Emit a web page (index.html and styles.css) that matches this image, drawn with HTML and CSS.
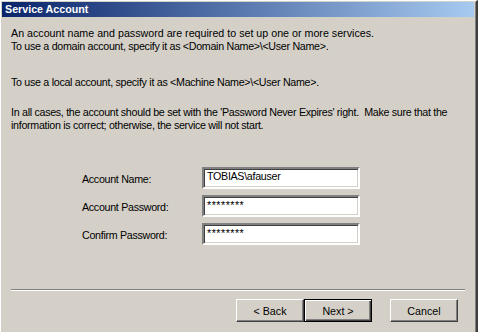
FILE: index.html
```html
<!DOCTYPE html>
<html lang="en">
<head>
    <meta charset="UTF-8">
    <title>Service Account</title>
    <link rel="stylesheet" href="styles.css">
</head>
<body>
    <div class="window">
        <div class="titlebar">Service Account</div>

        <div class="content">
            <p class="para first"><span class="wide">An account name and password are required to set up one or more services.</span><br>
            To use a domain account, specify it as &lt;Domain Name&gt;\&lt;User Name&gt;.</p>

            <p class="para second">To use a local account, specify it as &lt;Machine Name&gt;\&lt;User Name&gt;.</p>

            <p class="para third">In all cases, the account should be set with the 'Password Never Expires' right.&nbsp; Make sure that the<br>
            information is correct; otherwise, the service will not start.</p>

            <!-- Account fields -->
            <div class="fields">
                <label class="field-label">Account Name:</label>
                <div class="field-box">TOBIAS\afauser</div>
                <label class="field-label">Account Password:</label>
                <div class="field-box masked">********</div>
                <label class="field-label">Confirm Password:</label>
                <div class="field-box masked">********</div>
            </div>
        </div>

        <div class="separator"></div>

        <div class="buttons">
            <button class="btn">&lt; Back</button>
            <button class="btn btn-default">Next &gt;</button>
            <button class="btn btn-cancel">Cancel</button>
        </div>
    </div>
</body>
</html>
```

FILE: styles.css
```css
html, body {
    margin: 0;
    padding: 0;
    background-color: #d4d0c8;
}
body {
    width: 478px;
    height: 332px;
    overflow: hidden;
    font-family: "Liberation Sans", Arial, sans-serif;
    font-size: 10.7px;
    letter-spacing: -0.3px; /* tighter, closer to Tahoma */
    color: #000;
}
.window {
    height: 332px;
    box-sizing: border-box;
    border-top: 1px solid #ffffff;
    border-left: 1px solid #ffffff;
    border-right: 2px solid #404040; /* dark window edge */
    box-shadow: inset 0 1px 0 #d4d0c8, inset -1px 0 0 #808080;
    padding: 1px 1px 0 1px;
}
.titlebar {
    height: 15px;
    line-height: 15px;
    margin-right: 1px;
    padding-left: 3px;
    color: #ffffff;
    font-weight: bold;
    letter-spacing: 0;
    background: linear-gradient(to right, #0a246a, #a6caf0); /* classic caption gradient */
}
.content {
    padding: 10px 0 0 9px;
}
.para {
    margin: 0;
    line-height: 13px;
    white-space: nowrap;
}
.wide {
    letter-spacing: 0;
}
.second {
    margin-top: 23px;
}
.third {
    margin-top: 17px;
}
.fields {
    display: grid;
    grid-template-columns: 120px 158px;
    row-gap: 6px;
    align-items: center;
    margin: 35px 0 0 71px;
}
.field-label {
    padding-top: 1px;
}
.field-box {
    height: 18px;
    line-height: 14px;
    padding: 0 3px;
    background-color: #ffffff;
    border: 2px solid;
    border-color: #808080 #ffffff #ffffff #808080;
    box-shadow: inset 1px 1px 0 #404040, inset -1px -1px 0 #d4d0c8;
    box-sizing: content-box;
    padding-left: 3px;
}
.masked {
    letter-spacing: 0.5px;
    line-height: 16px;
}
.separator {
    margin: 44px 10px 0 9px;
    border-top: 1px solid #808080;
    border-bottom: 1px solid #ffffff;
}
.buttons {
    display: flex;
    padding: 8px 0 0 234px;
}
.btn {
    width: 68px;
    height: 23px;
    margin: 0;
    padding: 0;
    font-family: "Liberation Sans", Arial, sans-serif;
    font-size: 10.7px;
    color: #000;
    background-color: #d4d0c8;
    border: 1px solid;
    border-color: #ffffff #404040 #404040 #ffffff;
    box-shadow: inset -1px -1px 0 #808080;
}
.btn-default {
    border: 1px solid #000;
    box-shadow: inset 1px 1px 0 #ffffff, inset -1px -1px 0 #404040, inset -2px -2px 0 #808080;
}
.btn-cancel {
    margin-left: 18px;
}
```
